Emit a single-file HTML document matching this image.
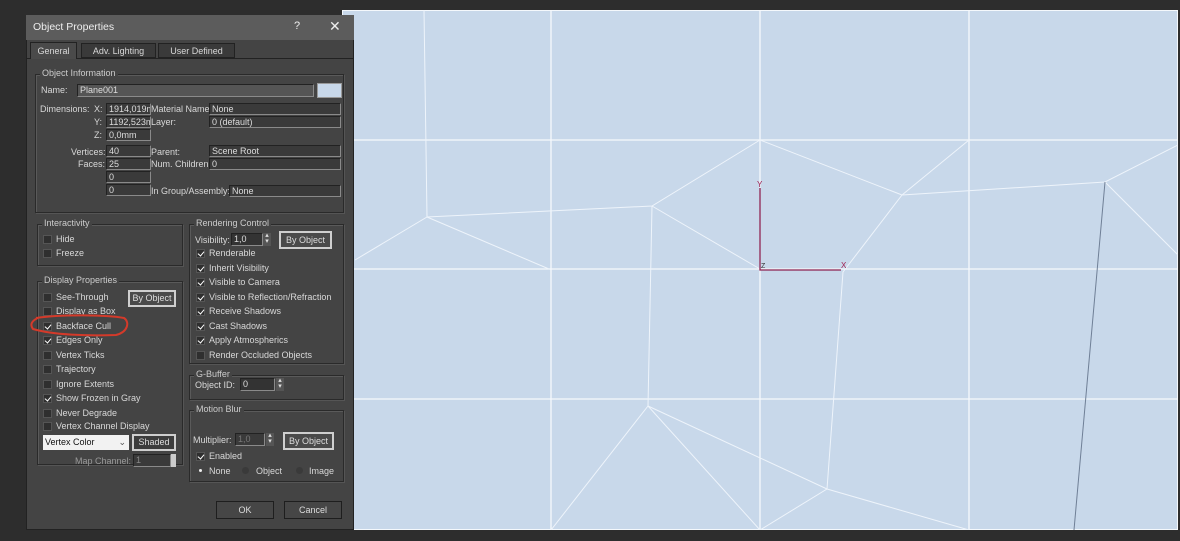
<!DOCTYPE html>
<html><head><style>
*{margin:0;padding:0;box-sizing:border-box}
body{width:1180px;height:541px;background:#2d2d2d;position:relative;overflow:hidden;font-family:"Liberation Sans",sans-serif;font-size:9px;color:#d8d8d8}
.a{position:absolute;white-space:nowrap}
.f{position:absolute;background:#3a3a3a;border:1px solid #8a8a8a;border-top-color:#222;border-left-color:#222;color:#ddd;padding-left:2px;line-height:10px;font-size:9px;overflow:hidden}
.g{position:absolute;border:1px solid #2a2a2a;box-shadow:1px 1px 0 #5a5a5a inset,1px 1px 0 #555}
.gl{position:absolute;background:#444;padding:0 2px;top:-7px;left:4px;color:#ccc}
.cb{position:absolute;width:9px;height:9px;background:#2f2f2f;border:1px solid #555}
.cb.c::after{content:"";position:absolute;left:2px;top:0px;width:3px;height:5px;border:solid #fff;border-width:0 1.5px 1.5px 0;transform:rotate(40deg)}
.btn{position:absolute;background:#4a4a4a;border:1px solid #1e1e1e;color:#ddd;text-align:center}
.btn.w{border:2px solid #cfcfcf}
.rad{position:absolute;width:7px;height:7px;border-radius:50%;background:#3a3a3a}
</style></head><body>
<svg class="a" style="left:342px;top:10px" width="836" height="520" viewBox="342 10 836 520">
<rect x="342" y="10" width="836" height="520" fill="#c8d8ea" stroke="#f4f8fc" stroke-width="2"/>
<g stroke="#f6f9fc" stroke-width="1.3" fill="none">
<line x1="551" y1="10" x2="551" y2="530"/><line x1="760" y1="10" x2="760" y2="530"/><line x1="969" y1="10" x2="969" y2="530"/>
<line x1="342" y1="140" x2="1178" y2="140"/><line x1="342" y1="269" x2="1178" y2="269"/><line x1="342" y1="399" x2="1178" y2="399"/>
</g>
<g stroke="#eef4fb" stroke-width="1" fill="none">
<polyline points="424,10 427,217 652,206 760,140 902,195 1105,182 1178,145"/>
<line x1="427" y1="217" x2="355" y2="260"/><line x1="427" y1="217" x2="549" y2="269"/>
<line x1="652" y1="206" x2="760" y2="269"/><polyline points="652,206 648,406 551,530"/>
<line x1="648" y1="406" x2="760" y2="530"/><polyline points="648,406 827,489 969,530"/><line x1="827" y1="489" x2="760" y2="530"/>
<polyline points="902,195 843,272 827,489"/><line x1="902" y1="195" x2="969" y2="140"/>
<line x1="1105" y1="182" x2="1178" y2="255"/>
</g>
<line x1="1105" y1="182" x2="1074" y2="530" stroke="#6f7f96" stroke-width="1"/>
<polyline points="760,188 760,270 841,270" stroke="#8a2050" stroke-width="1.3" fill="none"/>
<text x="757" y="187" font-size="8" fill="#a02050" font-family="Liberation Sans">Y</text>
<text x="761" y="268" font-size="7" fill="#333" font-family="Liberation Sans">Z</text>
<text x="841" y="268" font-size="8" fill="#a02050" font-family="Liberation Sans">X</text>
</svg>

<div class="a" style="left:26px;top:15px;width:328px;height:515px;background:#444;border:1px solid #222"></div>
<div class="a" style="left:26px;top:15px;width:328px;height:25px;background:#5c5c5c"></div>
<div class="a" style="left:33px;top:21px;font-size:10.5px;color:#eee">Object Properties</div>
<div class="a" style="left:294px;top:20px;font-size:11px;color:#eee">?</div>
<div class="a" style="left:329px;top:18px;font-size:14px;color:#eee">✕</div>
<div class="a" style="left:27px;top:58px;width:326px;height:1px;background:#222"></div>
<div class="a" style="left:30px;top:42px;width:47px;height:17px;background:#4a4a4a;border:1px solid #222;border-bottom:none;text-align:center;line-height:16px">General</div>
<div class="a" style="left:81px;top:43px;width:75px;height:15px;background:#3a3a3a;border:1px solid #222;text-align:center;line-height:14px">Adv. Lighting</div>
<div class="a" style="left:158px;top:43px;width:77px;height:15px;background:#3a3a3a;border:1px solid #222;text-align:center;line-height:14px">User Defined</div>

<div class="g" style="left:35px;top:74px;width:309px;height:139px"><span class="gl">Object Information</span></div>
<div class="a" style="left:41px;top:85px">Name:</div>
<div class="f" style="left:77px;top:84px;width:237px;height:13px;background:#555">Plane001</div>
<div class="a" style="left:317px;top:83px;width:25px;height:15px;background:#c8d8ea;border:1px solid #999"></div>
<div class="a" style="left:40px;top:104px">Dimensions:</div>
<div class="a" style="left:94px;top:104px">X:</div><div class="a" style="left:94px;top:117px">Y:</div><div class="a" style="left:94px;top:130px">Z:</div>
<div class="f" style="left:106px;top:103px;width:45px;height:12px">1914,019m</div>
<div class="f" style="left:106px;top:116px;width:45px;height:12px">1192,523m</div>
<div class="f" style="left:106px;top:129px;width:45px;height:12px">0,0mm</div>
<div class="a" style="left:71px;top:147px">Vertices:</div><div class="a" style="left:78px;top:159px">Faces:</div>
<div class="f" style="left:106px;top:145px;width:45px;height:12px">40</div>
<div class="f" style="left:106px;top:158px;width:45px;height:12px">25</div>
<div class="f" style="left:106px;top:171px;width:45px;height:12px">0</div>
<div class="f" style="left:106px;top:184px;width:45px;height:12px">0</div>
<div class="a" style="left:151px;top:104px">Material Name:</div><div class="a" style="left:151px;top:117px">Layer:</div>
<div class="a" style="left:151px;top:147px">Parent:</div><div class="a" style="left:151px;top:159px">Num. Children:</div>
<div class="a" style="left:151px;top:186px">In Group/Assembly:</div>
<div class="f" style="left:209px;top:103px;width:132px;height:12px">None</div>
<div class="f" style="left:209px;top:116px;width:132px;height:12px">0 (default)</div>
<div class="f" style="left:209px;top:145px;width:132px;height:12px">Scene Root</div>
<div class="f" style="left:209px;top:158px;width:132px;height:12px">0</div>
<div class="f" style="left:229px;top:185px;width:112px;height:12px">None</div>

<div class="g" style="left:37px;top:224px;width:146px;height:42px"><span class="gl">Interactivity</span></div>
<div class="g" style="left:37px;top:281px;width:146px;height:184px"><span class="gl">Display Properties</span></div>
<div class="g" style="left:189px;top:224px;width:155px;height:140px"><span class="gl">Rendering Control</span></div>
<div class="g" style="left:189px;top:375px;width:155px;height:25px"><span class="gl">G-Buffer</span></div>
<div class="g" style="left:189px;top:410px;width:155px;height:72px"><span class="gl">Motion Blur</span></div>

<div class="cb" style="left:43px;top:235px"></div><div class="a" style="left:56px;top:234px">Hide</div>
<div class="cb" style="left:43px;top:249px"></div><div class="a" style="left:56px;top:248px">Freeze</div>
<div class="cb" style="left:43px;top:293px"></div><div class="a" style="left:56px;top:292px">See-Through</div>
<div class="cb" style="left:43px;top:307px"></div><div class="a" style="left:56px;top:306px">Display as Box</div>
<div class="cb c" style="left:43px;top:322px"></div><div class="a" style="left:56px;top:321px">Backface Cull</div>
<div class="cb c" style="left:43px;top:336px"></div><div class="a" style="left:56px;top:335px">Edges Only</div>
<div class="cb" style="left:43px;top:351px"></div><div class="a" style="left:56px;top:350px">Vertex Ticks</div>
<div class="cb" style="left:43px;top:365px"></div><div class="a" style="left:56px;top:364px">Trajectory</div>
<div class="cb" style="left:43px;top:380px"></div><div class="a" style="left:56px;top:379px">Ignore Extents</div>
<div class="cb c" style="left:43px;top:394px"></div><div class="a" style="left:56px;top:393px">Show Frozen in Gray</div>
<div class="cb" style="left:43px;top:409px"></div><div class="a" style="left:56px;top:408px">Never Degrade</div>
<div class="cb" style="left:43px;top:422px"></div><div class="a" style="left:56px;top:421px">Vertex Channel Display</div>
<div class="btn w" style="left:128px;top:290px;width:48px;height:17px;line-height:13px">By Object</div>
<div class="a" style="left:43px;top:435px;width:86px;height:15px;background:#f2f2f2;color:#111;padding-left:2px;line-height:15px">Vertex Color<span style="position:absolute;right:3px;color:#555">⌄</span></div>
<div class="btn w" style="left:132px;top:434px;width:44px;height:17px;line-height:13px;background:#3d3d3d">Shaded</div>
<div class="a" style="left:75px;top:456px;color:#999">Map Channel:</div>
<div class="f" style="left:133px;top:454px;width:38px;height:13px;color:#888">1</div>
<div class="a" style="left:171px;top:454px;width:5px;height:13px;background:#ccc"></div>
<svg class="a" style="left:28px;top:312px" width="104" height="28"><path d="M8,6 C35,2 80,3 96,6 C102,10 100,20 88,23 C60,24 25,23 5,17 C2,13 3,9 10,6" fill="none" stroke="#d43a2a" stroke-width="2"/></svg>

<div class="a" style="left:195px;top:235px">Visibility:</div>
<div class="f" style="left:231px;top:233px;width:32px;height:13px;background:#333">1,0</div>
<div class="a" style="left:263px;top:233px;width:8px;height:13px;background:#555;color:#ddd;font-size:7px;line-height:6px;text-align:center">▴<br>▾</div>
<div class="btn w" style="left:279px;top:231px;width:53px;height:18px;line-height:14px">By Object</div>
<div class="cb c" style="left:196px;top:249px"></div><div class="a" style="left:209px;top:248px">Renderable</div>
<div class="cb c" style="left:196px;top:264px"></div><div class="a" style="left:209px;top:263px">Inherit Visibility</div>
<div class="cb c" style="left:196px;top:278px"></div><div class="a" style="left:209px;top:277px">Visible to Camera</div>
<div class="cb c" style="left:196px;top:293px"></div><div class="a" style="left:209px;top:292px">Visible to Reflection/Refraction</div>
<div class="cb c" style="left:196px;top:307px"></div><div class="a" style="left:209px;top:306px">Receive Shadows</div>
<div class="cb c" style="left:196px;top:322px"></div><div class="a" style="left:209px;top:321px">Cast Shadows</div>
<div class="cb c" style="left:196px;top:336px"></div><div class="a" style="left:209px;top:335px">Apply Atmospherics</div>
<div class="cb" style="left:196px;top:351px"></div><div class="a" style="left:209px;top:350px">Render Occluded Objects</div>
<div class="a" style="left:195px;top:380px">Object ID:</div>
<div class="f" style="left:240px;top:378px;width:35px;height:13px;background:#333">0</div>
<div class="a" style="left:276px;top:378px;width:8px;height:13px;background:#555;color:#ddd;font-size:7px;line-height:6px;text-align:center">▴<br>▾</div>
<div class="a" style="left:193px;top:435px">Multiplier:</div>
<div class="f" style="left:235px;top:433px;width:30px;height:13px;color:#777;background:#3a3a3a">1,0</div>
<div class="a" style="left:266px;top:433px;width:8px;height:13px;background:#555;color:#ddd;font-size:7px;line-height:6px;text-align:center">▴<br>▾</div>
<div class="btn w" style="left:283px;top:432px;width:51px;height:18px;line-height:14px">By Object</div>
<div class="cb c" style="left:196px;top:452px"></div><div class="a" style="left:209px;top:451px">Enabled</div>
<div class="rad" style="left:197px;top:467px;background:#eee;border:2px solid #444"></div><div class="a" style="left:209px;top:466px">None</div>
<div class="rad" style="left:242px;top:467px"></div><div class="a" style="left:256px;top:466px">Object</div>
<div class="rad" style="left:296px;top:467px"></div><div class="a" style="left:309px;top:466px">Image</div>
<div class="btn" style="left:216px;top:501px;width:58px;height:18px;line-height:16px;background:#464646">OK</div>
<div class="btn" style="left:284px;top:501px;width:58px;height:18px;line-height:16px;background:#464646">Cancel</div>
</body></html>
